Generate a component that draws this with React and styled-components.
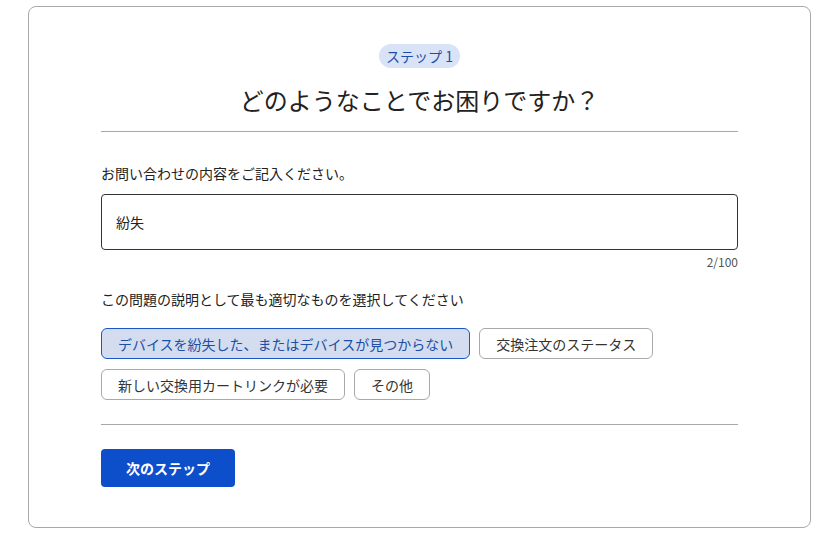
import React, { useState } from "react";
import styled, { createGlobalStyle } from "styled-components";

const GlobalStyle = createGlobalStyle`
    body {
        margin: 0;
        background: #fff;
        font-family: "Noto Sans CJK JP", "Noto Sans", sans-serif;
        color: #222;
    }
`;

const Page = styled.div`
    padding: 6px 24px 8px 28px;
`;

const Card = styled.section`
    width: 783px;
    box-sizing: border-box;
    border: 1px solid #a8a8a8;
    border-radius: 8px;
    padding: 37px 72px 40px 72px;
    display: flex;
    flex-direction: column;
`;

const Header = styled.div`
    display: flex;
    flex-direction: column;
    align-items: center;
`;

const Badge = styled.span`
    background: #d8e3f7;
    color: #1c4ea6;
    font-size: 14px;
    height: 24px;
    line-height: 24px;
    padding: 0 7px;
    border-radius: 12px;
`;

const Title = styled.h1`
    margin: 16px 0 0;
    font-size: 24px;
    font-weight: 400;
    line-height: 32px;
    color: #222;
`;

const Divider = styled.hr`
    border: none;
    border-top: 1px solid #a8a8a8;
    margin: ${(p) => p.$top}px 0 0;
    width: 100%;
`;

const Label = styled.p`
    margin: ${(p) => p.$top}px 0 0;
    font-size: 14px;
    line-height: 20px;
    color: #222;
`;

const TextInput = styled.input`
    margin-top: 11px;
    height: 56px;
    box-sizing: border-box;
    border: 1px solid #333;
    border-radius: 4px;
    padding: 0 14px;
    font-size: 14px;
    font-family: inherit;
    color: #222;
    outline: none;
`;

const Counter = styled.div`
    margin-top: 4px;
    text-align: right;
    font-size: 12px;
    line-height: 16px;
    color: #555;
`;

const Chips = styled.div`
    margin-top: 19px;
    display: flex;
    flex-wrap: wrap;
    gap: 10px 9px;
`;

const Chip = styled.button`
    height: 31px;
    box-sizing: border-box;
    padding: 0 16px;
    border-radius: 6px;
    font-family: inherit;
    font-size: 14px;
    cursor: pointer;
    border: 1px solid ${(p) => (p.$active ? "#1a56c8" : "#a8a8a8")};
    background: ${(p) => (p.$active ? "#d3ddef" : "#fff")};
    color: ${(p) => (p.$active ? "#1c4ea6" : "#333")};
`;

const NextButton = styled.button`
    margin-top: 24px;
    align-self: flex-start;
    width: 134px;
    height: 38px;
    border: none;
    border-radius: 4px;
    background: #0d4fcb;
    color: #fff;
    font-family: inherit;
    font-size: 14px;
    font-weight: 700;
    cursor: pointer;
`;

const options = [
    "デバイスを紛失した、またはデバイスが見つからない",
    "交換注文のステータス",
    "新しい交換用カートリンクが必要",
    "その他",
];

const App = () => {
    const [text, setText] = useState("紛失");
    const [selected, setSelected] = useState(0);

    return (
        <Page>
            <GlobalStyle />
            <Card>
                <Header>
                    <Badge>ステップ 1</Badge>
                    <Title>どのようなことでお困りですか？</Title>
                </Header>
                <Divider $top={15} />
                <Label $top={31}>お問い合わせの内容をご記入ください。</Label>
                <TextInput
                    type="text"
                    value={text}
                    maxLength={100}
                    onChange={(e) => setText(e.target.value)}
                />
                <Counter>{text.length}/100</Counter>
                <Label $top={19}>この問題の説明として最も適切なものを選択してください</Label>
                <Chips>
                    {options.map((o, i) => (
                        <Chip key={o} $active={selected === i} onClick={() => setSelected(i)}>
                            {o}
                        </Chip>
                    ))}
                </Chips>
                <Divider $top={24} />
                <NextButton>次のステップ</NextButton>
            </Card>
        </Page>
    );
};

export default App;
